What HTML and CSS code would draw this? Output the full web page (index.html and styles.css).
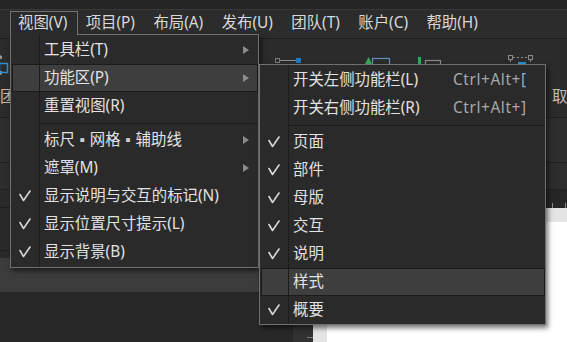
FILE: index.html
```html
<!DOCTYPE html>
<html lang="zh-CN">
<head>
<meta charset="utf-8">
<title>视图菜单</title>
<link rel="stylesheet" href="styles.css">
</head>
<body>
<div class="app">
  <div class="topstrip"></div>
  <div class="menubar">
    <div class="mb-item active">视图(V)</div>
    <div class="mb-item">项目(P)</div>
    <div class="mb-item">布局(A)</div>
    <div class="mb-item">发布(U)</div>
    <div class="mb-item">团队(T)</div>
    <div class="mb-item">账户(C)</div>
    <div class="mb-item">帮助(H)</div>
  </div>
  <div class="toolbar">
    <div class="tool edge">
      <svg class="ticon" width="20" height="20" viewBox="0 0 20 20"><path d="M2 1 H0 M2 1 V4 M2 16 V19 H0" fill="none" stroke="#d0d0d0" stroke-width="1.2"/><rect x="0.5" y="8.5" width="8" height="9" fill="none" stroke="#2b8fd6" stroke-width="1.5"/></svg>
      <div class="tlabel">团</div>
    </div>
    <div></div>
    <div class="tool"><svg class="ticon" width="26" height="20" viewBox="0 0 26 20"><rect x="0.5" y="3.5" width="4" height="4" fill="none" stroke="#7a7a7a"/><path d="M5 5.5 H21" stroke="#8a8a8a"/><rect x="21" y="3" width="5" height="5" fill="#1f78c1"/></svg></div>
    <div></div>
    <div class="tool"><svg class="ticon" width="26" height="20" viewBox="0 0 26 20"><path d="M0 9 L3.5 2 L7 9 Z" fill="#36a85a"/><rect x="7.5" y="3.5" width="17" height="14" fill="none" stroke="#5d8fbf" stroke-width="1.2"/></svg></div>
    <div></div>
    <div class="tool"><svg class="ticon" width="24" height="20" viewBox="0 0 24 20"><rect x="0" y="2" width="3" height="16" fill="#36a85a"/><rect x="7.5" y="5.5" width="15" height="12" fill="none" stroke="#8a8a8a" stroke-width="1.2"/></svg></div>
    <div></div>
    <div class="tool"><svg class="ticon" width="26" height="20" viewBox="0 0 26 20"><rect x="0.5" y="0.5" width="4" height="4" fill="none" stroke="#8a8a8a"/><rect x="20.5" y="0.5" width="4" height="4" fill="none" stroke="#8a8a8a"/><path d="M5 2.5 H20" stroke="#8a8a8a" stroke-dasharray="2 2"/><path d="M2.5 5 V18 M22.5 5 V18" stroke="#8a8a8a" stroke-dasharray="2 2"/><rect x="10" y="7" width="8" height="2" fill="#2b8fd6"/></svg></div>
    <div></div>
    <div class="tool"><div class="ticon-space"></div><div class="tlabel">取</div></div>
  </div>
  <div class="row2"></div>
  <div class="row3"></div>
  <div class="main">
    <div class="leftpanel">
      <div class="lp-a"></div>
      <div class="lp-b"></div>
      <div class="lp-c"></div>
      <div class="lp-band"></div>
      <div class="lp-rest"></div>
    </div>
    <div class="stage">
      <div class="hruler"></div>
      <div class="stage-body">
        <div class="vruler"></div>
        <div class="canvas-wrap"><div class="canvas"></div></div>
      </div>
    </div>
  </div>
</div>

<div class="menu main-menu">
  <div class="mi"><div class="gut"></div><div class="lbl">工具栏(T)</div><div class="arr"></div></div>
  <div class="mi hl"><div class="gut"></div><div class="lbl">功能区(P)</div><div class="arr"></div></div>
  <div class="mi"><div class="gut"></div><div class="lbl">重置视图(R)</div></div>
  <div class="sep"></div>
  <div class="mi"><div class="gut"></div><div class="lbl">标尺<span class="dot">▪</span>网格<span class="dot">▪</span>辅助线</div><div class="arr"></div></div>
  <div class="mi"><div class="gut"></div><div class="lbl">遮罩(M)</div><div class="arr"></div></div>
  <div class="mi"><div class="gut"><svg class="ck" width="12" height="12" viewBox="0 0 12 12"><path d="M1 4.5 L4.5 10.5 L11 1" fill="none" stroke="#d8d8d8" stroke-width="1.6" stroke-linecap="round" stroke-linejoin="round"/></svg></div><div class="lbl">显示说明与交互的标记(N)</div></div>
  <div class="mi"><div class="gut"><svg class="ck" width="12" height="12" viewBox="0 0 12 12"><path d="M1 4.5 L4.5 10.5 L11 1" fill="none" stroke="#d8d8d8" stroke-width="1.6" stroke-linecap="round" stroke-linejoin="round"/></svg></div><div class="lbl">显示位置尺寸提示(L)</div></div>
  <div class="mi"><div class="gut"><svg class="ck" width="12" height="12" viewBox="0 0 12 12"><path d="M1 4.5 L4.5 10.5 L11 1" fill="none" stroke="#d8d8d8" stroke-width="1.6" stroke-linecap="round" stroke-linejoin="round"/></svg></div><div class="lbl">显示背景(B)</div></div>
</div>

<div class="menu sub-menu">
  <div class="mi"><div class="gut"></div><div class="lbl">开关左侧功能栏(L)</div><div class="sc">Ctrl+Alt+[</div></div>
  <div class="mi"><div class="gut"></div><div class="lbl">开关右侧功能栏(R)</div><div class="sc">Ctrl+Alt+]</div></div>
  <div class="sep"></div>
  <div class="mi"><div class="gut"><svg class="ck" width="12" height="12" viewBox="0 0 12 12"><path d="M1 4.5 L4.5 10.5 L11 1" fill="none" stroke="#d8d8d8" stroke-width="1.6" stroke-linecap="round" stroke-linejoin="round"/></svg></div><div class="lbl">页面</div></div>
  <div class="mi"><div class="gut"><svg class="ck" width="12" height="12" viewBox="0 0 12 12"><path d="M1 4.5 L4.5 10.5 L11 1" fill="none" stroke="#d8d8d8" stroke-width="1.6" stroke-linecap="round" stroke-linejoin="round"/></svg></div><div class="lbl">部件</div></div>
  <div class="mi"><div class="gut"><svg class="ck" width="12" height="12" viewBox="0 0 12 12"><path d="M1 4.5 L4.5 10.5 L11 1" fill="none" stroke="#d8d8d8" stroke-width="1.6" stroke-linecap="round" stroke-linejoin="round"/></svg></div><div class="lbl">母版</div></div>
  <div class="mi"><div class="gut"><svg class="ck" width="12" height="12" viewBox="0 0 12 12"><path d="M1 4.5 L4.5 10.5 L11 1" fill="none" stroke="#d8d8d8" stroke-width="1.6" stroke-linecap="round" stroke-linejoin="round"/></svg></div><div class="lbl">交互</div></div>
  <div class="mi"><div class="gut"><svg class="ck" width="12" height="12" viewBox="0 0 12 12"><path d="M1 4.5 L4.5 10.5 L11 1" fill="none" stroke="#d8d8d8" stroke-width="1.6" stroke-linecap="round" stroke-linejoin="round"/></svg></div><div class="lbl">说明</div></div>
  <div class="mi hl"><div class="gut"></div><div class="lbl">样式</div></div>
  <div class="mi"><div class="gut"><svg class="ck" width="12" height="12" viewBox="0 0 12 12"><path d="M1 4.5 L4.5 10.5 L11 1" fill="none" stroke="#d8d8d8" stroke-width="1.6" stroke-linecap="round" stroke-linejoin="round"/></svg></div><div class="lbl">概要</div></div>
</div>
</body>
</html>
```

FILE: styles.css
```css
* { box-sizing: border-box; margin: 0; padding: 0; }
html, body { width: 567px; height: 342px; overflow: hidden; }
body {
  position: relative;
  background: #282828;
  font-family: "Noto Sans", "Noto Sans CJK SC", sans-serif;
  font-size: 15.4px;
  color: #e2e2e2;
}
.app { display: flex; flex-direction: column; height: 342px; }

.topstrip { height: 10px; flex: none; background: #252525; border-bottom: 1px solid #383838; }

.menubar {
  height: 29px; flex: none;
  display: flex; align-items: flex-start;
  padding-left: 10px;
  background: #2c2c2c;
  border-bottom: 1px solid #1e1e1e;
}
.mb-item {
  margin-top: 1px;
  height: 24px;
  line-height: 22px;
  padding: 0 9.4px 0 7px;
  border: 1px solid transparent;
  border-bottom: 0;
  color: #d9d9d9;
  white-space: nowrap;
}
.mb-item.active {
  position: relative;
  z-index: 3;
  background: #2a2a2a;
  border-color: #737373;
}

.toolbar {
  height: 79px; flex: none;
  background: #2b2b2b;
  border-bottom: 1px solid #1f1f1f;
  display: grid;
  grid-template-columns: 10px 265px 26px 64px 26px 27px 24px 66px 26px 18px 1fr;
  padding-top: 16px;
}
.tool { display: flex; flex-direction: column; align-items: flex-start; }
.ticon { display: block; }
.ticon-space { height: 20px; }
.tlabel { margin-top: 12px; line-height: 20px; color: #bdbdbd; white-space: nowrap; }
.edge .ticon { margin-left: -1px; }

.row2 { height: 45px; flex: none; background: #2e2e2e; border-bottom: 1px solid #1f1f1f; }
.row3 { height: 27px; flex: none; background: #2d2d2d; border-bottom: 1px solid #1f1f1f; }

.main { flex: 1; display: grid; grid-template-columns: 293px 1fr; }
.leftpanel { display: flex; flex-direction: column; }
.lp-a { height: 18px; background: #2a2a2a; border-bottom: 1px solid #1e1e1e; }
.lp-b { height: 43px; background: #2a2a2a; border-bottom: 1px solid #1e1e1e; }
.lp-c { height: 7px; background: #2a2a2a; }
.lp-band { height: 34px; background: #3c3c3c; }
.lp-rest { flex: 1; background: #282828; }

.stage { display: flex; flex-direction: column; }
.hruler {
  height: 18px; flex: none;
  background:
    repeating-linear-gradient(to right, transparent 0 12px, #8a8a8a 12px 13px) 0 13px / 100% 5px no-repeat,
    #262626;
}
.stage-body { flex: 1; display: grid; grid-template-columns: 20px 1fr; }
.vruler {
  background:
    repeating-linear-gradient(to bottom, transparent 0 12px, #7a7a7a 12px 13px) 14px 0 / 6px 100% no-repeat,
    #323232;
}
.canvas-wrap { background: #e4e4e4; padding: 14px 0 0 14px; display: flex; }
.canvas { flex: 1; background: #ffffff; }

/* menus */
.menu {
  position: absolute;
  z-index: 2;
  background: linear-gradient(to right, transparent 28px, #1d1d1d 28px, #1d1d1d 29px, transparent 29px) #2a2a2a;
  border: 1px solid #707070;
  padding: 1px 0 1px 1px;
  box-shadow: 2px 3px 5px rgba(0, 0, 0, 0.55);
}
.main-menu { left: 10px; top: 34px; width: 249px; }
.sub-menu { left: 259px; top: 64px; width: 287px; padding-bottom: 0; }

.mi {
  display: flex; align-items: center;
  height: 28px;
  border: 1px solid transparent;
  white-space: nowrap;
}
.mi.hl { background: #3e3e3e; border-color: #1b1b1b; }
.gut {
  width: 27px; height: 100%; flex: none;
  border-right: 1px solid #1d1d1d;
  display: flex; align-items: center; justify-content: center;
}
.ck { display: block; margin-right: 2px; }
.lbl { flex: 1; padding-left: 4px; line-height: 26px; color: #e2e2e2; }
.dot { display: inline-block; width: 15px; text-align: center; font-size: 14px; color: #d0d0d0; vertical-align: 0; }
.arr {
  width: 0; height: 0; flex: none;
  border-left: 6px solid #8b8b8b;
  border-top: 4px solid transparent;
  border-bottom: 4px solid transparent;
  margin-right: 8px;
}
.sc { width: 91px; flex: none; color: #a9a9a9; line-height: 26px; letter-spacing: 0.6px; }
.sep {
  height: 6px;
  margin-left: 28px;
  background: linear-gradient(#1b1b1b, #1b1b1b) 0 3px / 100% 1px no-repeat;
}
```
